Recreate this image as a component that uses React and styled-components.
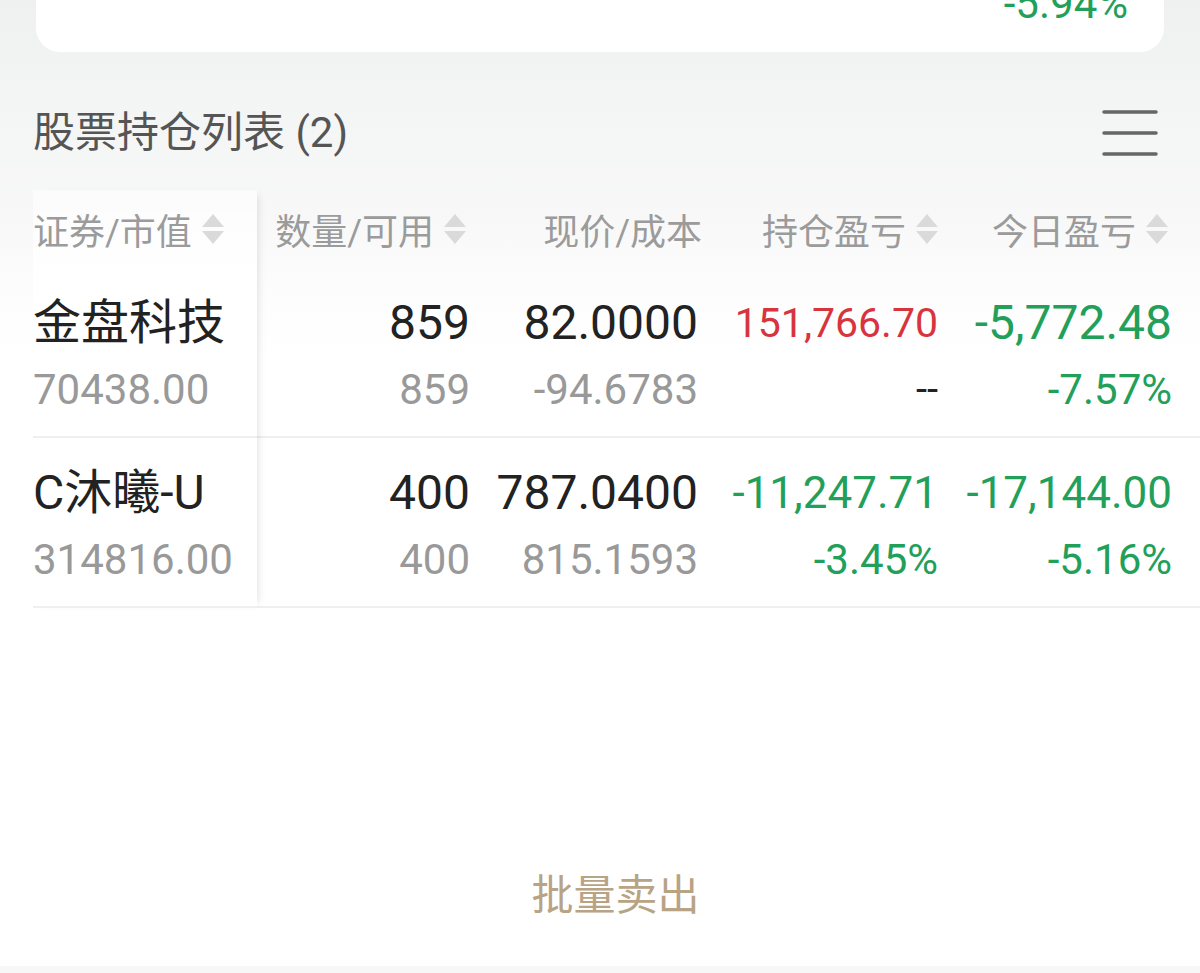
import React from 'react';
import styled, { createGlobalStyle } from 'styled-components';

const GlobalStyle = createGlobalStyle`
  html, body {
    margin: 0;
    padding: 0;
    background: #fff;
  }
  body {
    font-family: Roboto, "Noto Sans CJK SC", sans-serif;
  }
`;

const GREEN = '#22a05a';
const RED = '#d8343d';

const holdings = [
  {
    name: '金盘科技',
    value: '70438.00',
    qty: '859',
    avail: '859',
    price: '82.0000',
    cost: '-94.6783',
    pnl: { text: '151,766.70', color: RED, size: 41 },
    pnlPct: { text: '--', color: '#222', size: 40 },
    today: { text: '-5,772.48', color: GREEN, size: 48 },
    todayPct: { text: '-7.57%', color: GREEN, size: 42 },
  },
  {
    name: 'C沐曦-U',
    value: '314816.00',
    qty: '400',
    avail: '400',
    price: '787.0400',
    cost: '815.1593',
    pnl: { text: '-11,247.71', color: GREEN, size: 44 },
    pnlPct: { text: '-3.45%', color: GREEN, size: 42 },
    today: { text: '-17,144.00', color: GREEN, size: 44 },
    todayPct: { text: '-5.16%', color: GREEN, size: 42 },
  },
];

function SortIcon() {
  return (
    <svg width="22" height="32" viewBox="0 0 22 32">
      <polygon points="0,14 11,1 22,14" fill="#dadada" />
      <polygon points="0,18 22,18 11,31" fill="#dadada" />
    </svg>
  );
}

function MenuIcon() {
  return (
    <svg width="56" height="50" viewBox="0 0 56 50">
      <g stroke="#666" strokeWidth="3.5" strokeLinecap="round">
        <line x1="2" y1="4" x2="54" y2="4" />
        <line x1="2" y1="25" x2="54" y2="25" />
        <line x1="2" y1="46" x2="54" y2="46" />
      </g>
    </svg>
  );
}

export default function App() {
  return (
    <>
      <GlobalStyle />
      <Page>
        <TopCard>
          <TopPct>-5.94%</TopPct>
        </TopCard>

        <TitleRow>
          <Title>股票持仓列表 (2)</Title>
          <MenuIcon />
        </TitleRow>

        <Table>
          <StickyCol>
            <HeadCell align="left">
              证券/市值 <SortIcon />
            </HeadCell>
            {holdings.map((h) => (
              <NameCell key={h.name}>
                <Name>{h.name}</Name>
                <Sub>{h.value}</Sub>
              </NameCell>
            ))}
          </StickyCol>

          <ScrollArea>
            <HeadRow>
              <HeadCell shift={4}>
                数量/可用 <SortIcon />
              </HeadCell>
              <HeadCell shift={-4}>现价/成本</HeadCell>
              <HeadCell>
                持仓盈亏 <SortIcon />
              </HeadCell>
              <HeadCell shift={4}>
                今日盈亏 <SortIcon />
              </HeadCell>
            </HeadRow>
            {holdings.map((h) => (
              <DataRow key={h.name}>
                <NumCell>
                  <Main>{h.qty}</Main>
                  <Sub>{h.avail}</Sub>
                </NumCell>
                <NumCell>
                  <Main>{h.price}</Main>
                  <Sub>{h.cost}</Sub>
                </NumCell>
                <NumCell>
                  <Main color={h.pnl.color} size={h.pnl.size}>{h.pnl.text}</Main>
                  <Sub color={h.pnlPct.color} size={h.pnlPct.size}>{h.pnlPct.text}</Sub>
                </NumCell>
                <NumCell>
                  <Main color={h.today.color} size={h.today.size}>{h.today.text}</Main>
                  <Sub color={h.todayPct.color} size={h.todayPct.size}>{h.todayPct.text}</Sub>
                </NumCell>
              </DataRow>
            ))}
          </ScrollArea>
        </Table>

        <Spacer />

        <ButtonBar>
          <SellButton>批量卖出</SellButton>
        </ButtonBar>
        <BottomStrip />
      </Page>
    </>
  );
}

const Page = styled.div`
  width: 1200px;
  height: 973px;
  display: flex;
  flex-direction: column;
  overflow: hidden;
  background: linear-gradient(
    180deg,
    #eff0f0 0px,
    #f4f5f5 120px,
    #f8f8f8 220px,
    #fdfdfd 300px,
    #ffffff 360px
  );
`;

const TopCard = styled.div`
  margin: 0 36px;
  height: 52px;
  flex-shrink: 0;
  background: #fff;
  border-radius: 0 0 24px 24px;
  overflow: hidden;
  display: flex;
  justify-content: flex-end;
  padding-right: 36px;
`;

const TopPct = styled.div`
  margin-top: -17px;
  font-size: 42px;
  line-height: 1;
  color: ${GREEN};
`;

const TitleRow = styled.div`
  height: 138px;
  flex-shrink: 0;
  box-sizing: border-box;
  padding: 56px 42px 0 33px;
  display: flex;
  align-items: flex-start;
  justify-content: space-between;
`;

const Title = styled.div`
  font-size: 42px;
  line-height: 50px;
  color: #555;
`;

const Table = styled.div`
  display: flex;
  padding-left: 33px;
`;

const StickyCol = styled.div`
  width: 224px;
  flex-shrink: 0;
  position: relative;
  z-index: 1;
  background: linear-gradient(180deg, rgba(255, 255, 255, 0.55) 0, rgba(255, 255, 255, 0.9) 78px, #fff 160px);
  box-shadow: 6px 0 8px -5px rgba(0, 0, 0, 0.12);
`;

const ScrollArea = styled.div`
  flex: 1;
  padding-right: 28px;
`;

const HeadRow = styled.div`
  display: grid;
  grid-template-columns: 213px 228px 240px 234px;
`;

const HeadCell = styled.div`
  height: 78px;
  display: flex;
  align-items: center;
  justify-content: ${(p) => (p.align === 'left' ? 'flex-start' : 'flex-end')};
  gap: 10px;
  font-size: 36px;
  color: #9b9b9b;
  white-space: nowrap;
  margin-right: ${(p) => p.shift || 0}px;
`;

const DataRow = styled.div`
  display: grid;
  grid-template-columns: 213px 228px 240px 234px;
  height: 170px;
  box-sizing: border-box;
  border-bottom: 2px solid #eef0f0;
  margin-right: -28px;
  padding-right: 28px;
`;

const NameCell = styled.div`
  height: 170px;
  box-sizing: border-box;
  border-bottom: 2px solid #eef0f0;
  padding-top: 27px;
  display: flex;
  flex-direction: column;
`;

const NumCell = styled.div`
  padding-top: 27px;
  display: flex;
  flex-direction: column;
  align-items: flex-end;
  white-space: nowrap;
`;

const Name = styled.div`
  font-size: 48px;
  line-height: 56px;
  color: #222;
  white-space: nowrap;
`;

const Main = styled.div`
  font-size: ${(p) => p.size || 48}px;
  line-height: 56px;
  color: ${(p) => p.color || '#222'};
`;

const Sub = styled.div`
  margin-top: 15px;
  font-size: ${(p) => p.size || 42}px;
  line-height: 48px;
  color: ${(p) => p.color || '#999'};
`;

const Spacer = styled.div`
  flex: 1;
`;

const ButtonBar = styled.div`
  height: 140px;
  flex-shrink: 0;
  display: flex;
  align-items: center;
  justify-content: center;
  padding-left: 31px;
`;

const SellButton = styled.button`
  border: 0;
  background: transparent;
  padding: 0;
  font-family: Roboto, "Noto Sans CJK SC", sans-serif;
  font-size: 42px;
  line-height: 50px;
  color: #b8a385;
  cursor: pointer;
`;

const BottomStrip = styled.div`
  height: 7px;
  flex-shrink: 0;
  background: #f7f7f7;
`;
